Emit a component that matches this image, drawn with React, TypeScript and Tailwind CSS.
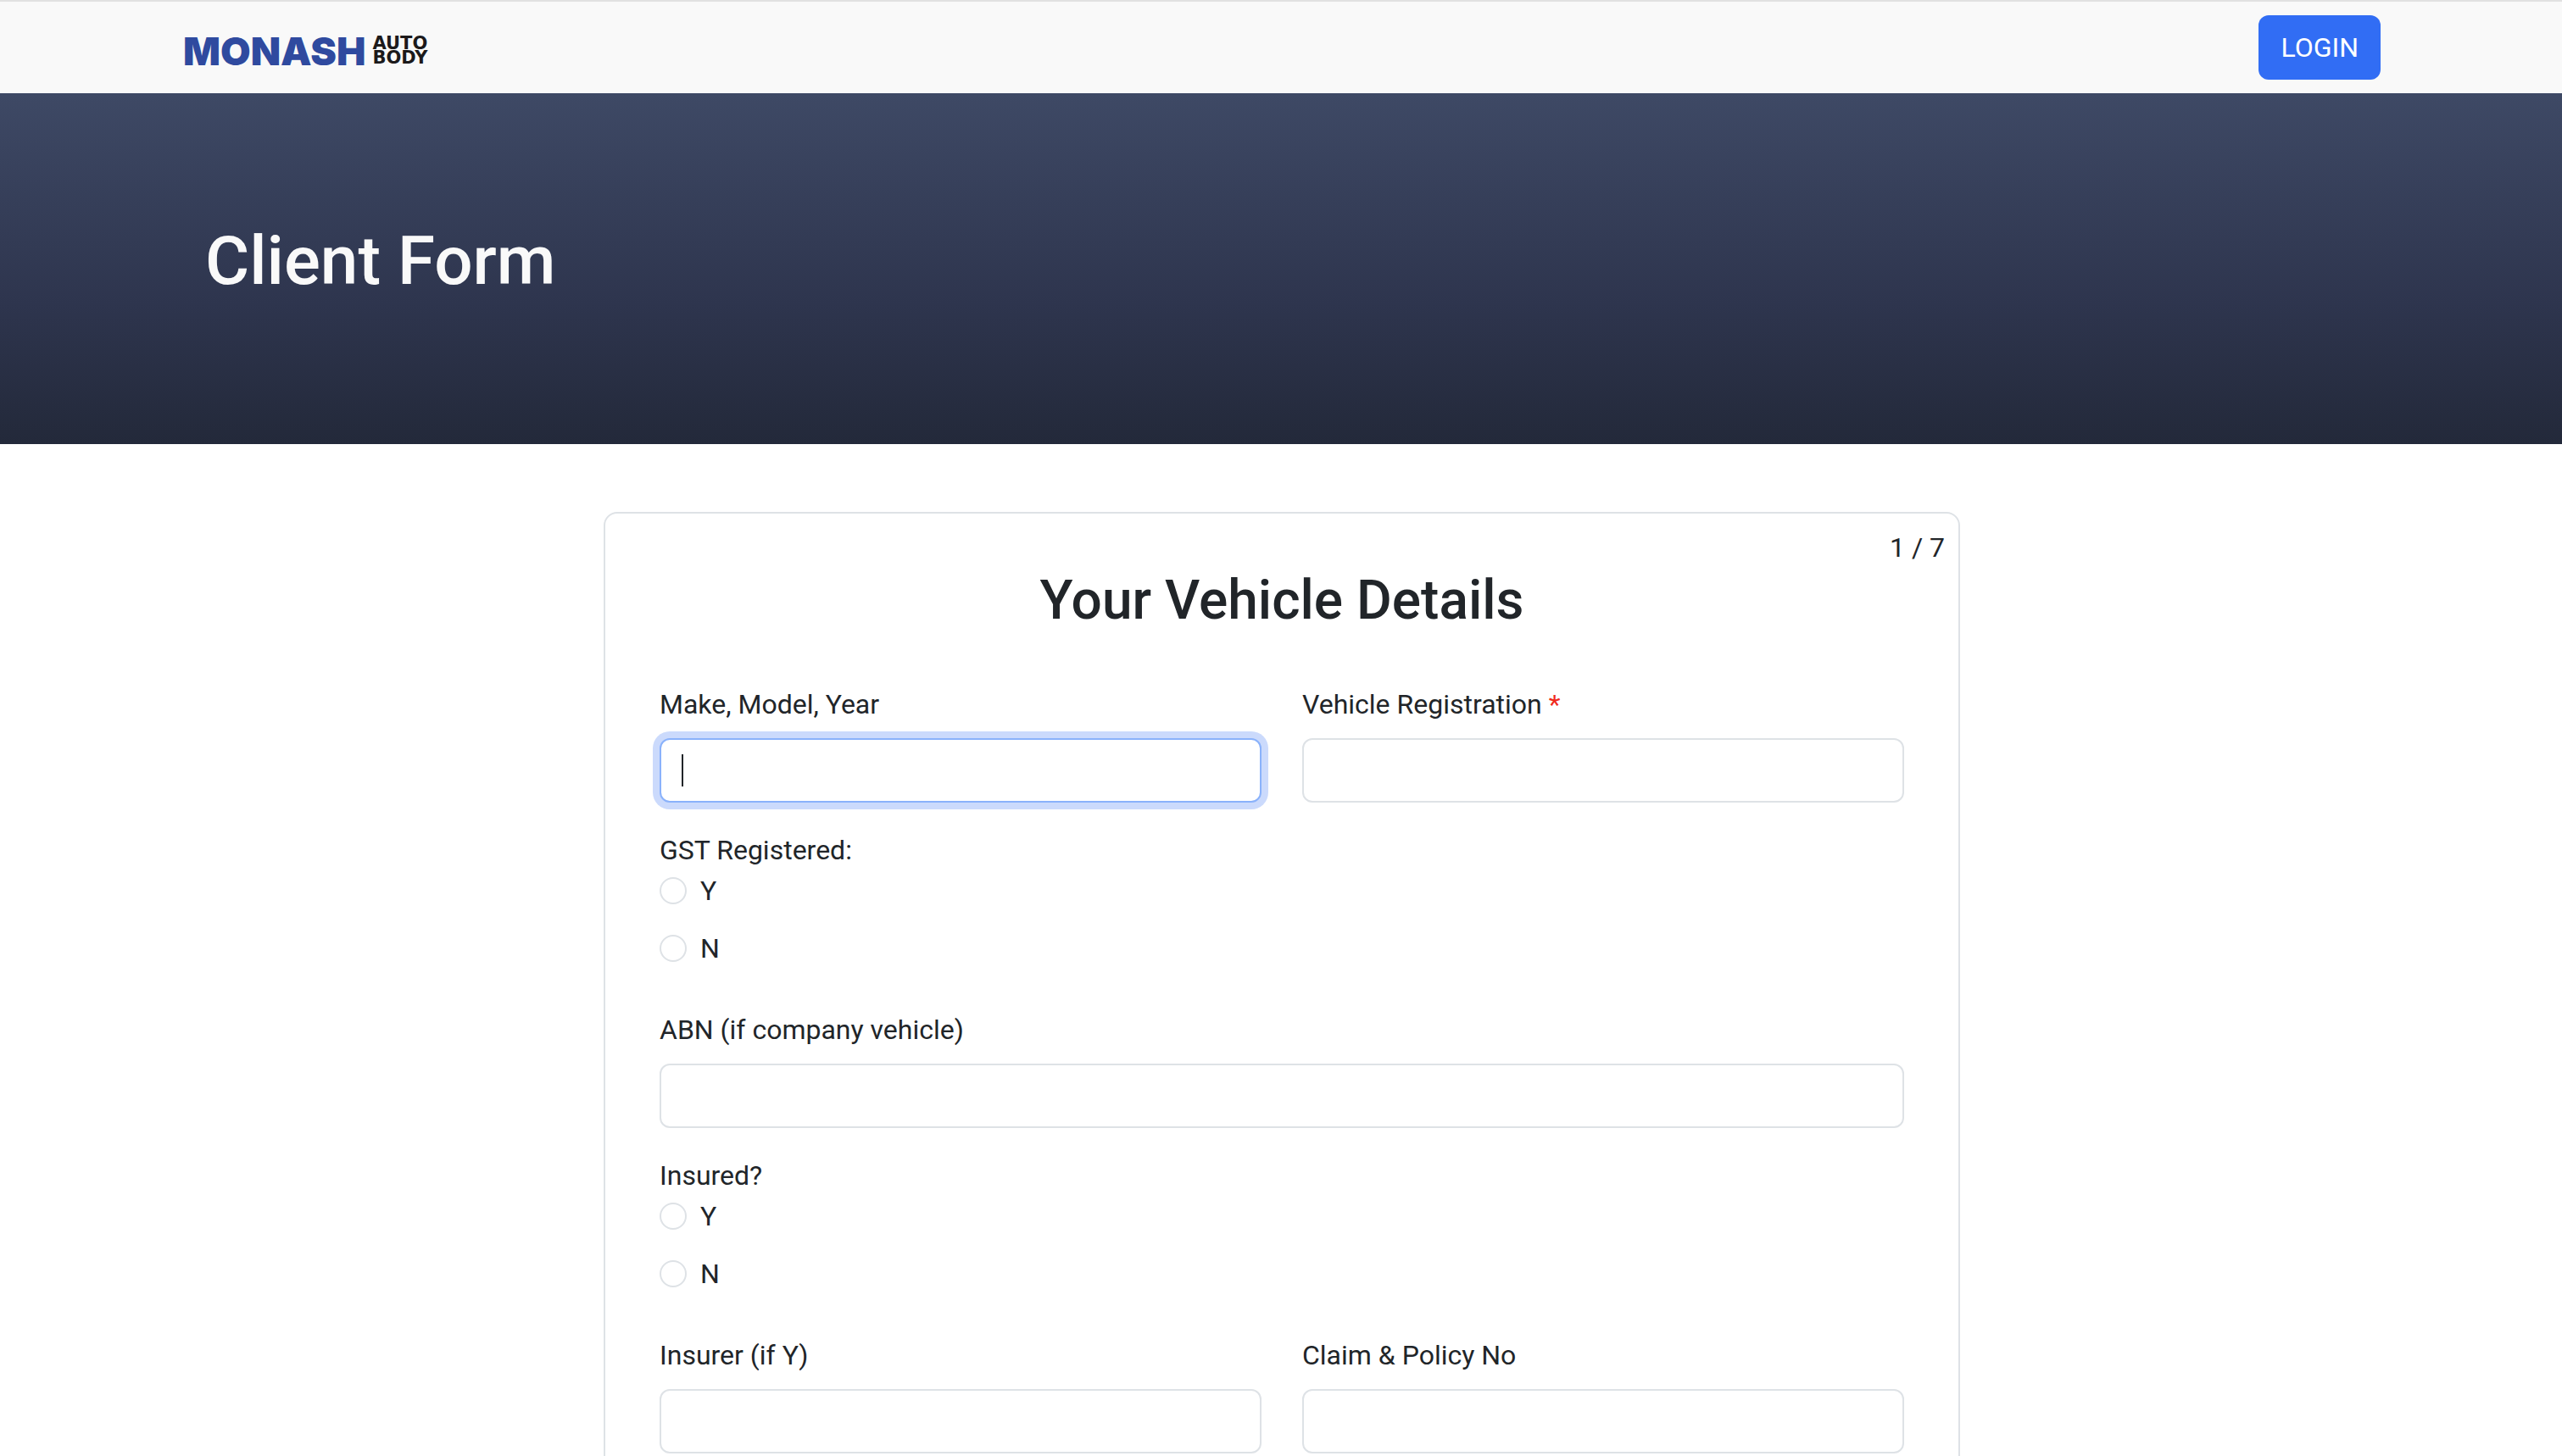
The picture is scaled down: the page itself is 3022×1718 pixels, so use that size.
import { useId } from "react";

type FieldProps = { label: string; required?: boolean; active?: boolean; className?: string };

function Field({ label, required, active, className = "" }: FieldProps) {
  const id = useId();
  return (
    <div className={className}>
      <label htmlFor={id} className="mb-4 block">
        {label}
        {required && <span className="text-[#f02a1d]"> *</span>}
      </label>
      <div className="relative">
        <input
          id={id}
          type="text"
          required={required}
          className={
            active
              ? "block h-[76px] w-full rounded-xl border-2 border-[#8ab2fb] bg-white px-6 caret-transparent outline-none ring-8 ring-[#cbdafc]"
              : "block h-[76px] w-full rounded-xl border-2 border-[#dee2e6] bg-white px-6 outline-none"
          }
        />
        {active && <span aria-hidden="true" className="absolute top-[19px] left-[26px] h-[38px] w-0.5 bg-[#212529]" />}
      </div>
    </div>
  );
}

function YesNo({ legend, name }: { legend: string; name: string }) {
  return (
    <fieldset className="col-span-2 mb-4">
      <legend>{legend}</legend>
      <div className="flex flex-col items-start gap-5">
        {["Y", "N"].map((value) => (
          <label key={value} className="flex items-center gap-4">
            <input
              type="radio"
              name={name}
              value={value}
              className="size-8 appearance-none rounded-full border-2 border-[#dee2e6] bg-white checked:border-8 checked:border-[#316df4]"
            />
            {value}
          </label>
        ))}
      </div>
    </fieldset>
  );
}

function Logo() {
  return (
    <a href="#" aria-label="Monash Auto Body" className="flex items-center gap-2 pt-2">
      <span className="font-[Inter,sans-serif] text-[46px] leading-[48px] font-black text-[#2f4a9f]">MONASH</span>
      <span className="flex flex-col font-['DejaVu_Sans',sans-serif] text-[21px] leading-[17px] font-bold text-[#1c1a1b]">
        <span>AUTO</span>
        <span>BODY</span>
      </span>
    </a>
  );
}

export default function App() {
  return (
    <div className="h-screen overflow-hidden bg-white pl-0.5 font-[Roboto,sans-serif] text-[32px] leading-[48px] text-[#212529]">
      <header className="-ml-0.5 border-t-2 border-[#e1e1e1] bg-[#f9f9f9] py-4 pl-0.5">
        <div className="mx-auto flex max-w-[2640px] items-center justify-between px-6">
          <Logo />
          <button type="button" className="h-[76px] rounded-xl bg-[#316df4] px-[26px] text-white">
            LOGIN
          </button>
        </div>
      </header>

      <section className="-ml-0.5 bg-linear-to-b from-[#3e4965] via-[#2e354e] via-60% to-[#23293a] pt-[150px] pb-[168px] pl-0.5">
        <div className="mx-auto max-w-[2640px] px-[50px]">
          <h1 className="text-[80px] leading-[96px] font-medium text-[#f9f9f9]">Client Form</h1>
        </div>
      </section>

      <main className="px-6 pt-20">
        <form className="mx-auto max-w-[1600px] rounded-2xl border-2 border-[#dee2e6] bg-white pt-4 pb-16">
          <p className="px-4 text-right">1 / 7</p>
          <h2 className="mb-[60px] text-center text-[64px] leading-[77px] font-medium">Your Vehicle Details</h2>
          <div className="grid grid-cols-2 gap-x-12 gap-y-8 px-16">
            <Field label="Make, Model, Year" active />
            <Field label="Vehicle Registration" required />
            <YesNo legend="GST Registered:" name="gst" />
            <Field label="ABN (if company vehicle)" className="col-span-2" />
            <YesNo legend="Insured?" name="insured" />
            <Field label="Insurer (if Y)" />
            <Field label="Claim & Policy No" />
          </div>
        </form>
      </main>
    </div>
  );
}
